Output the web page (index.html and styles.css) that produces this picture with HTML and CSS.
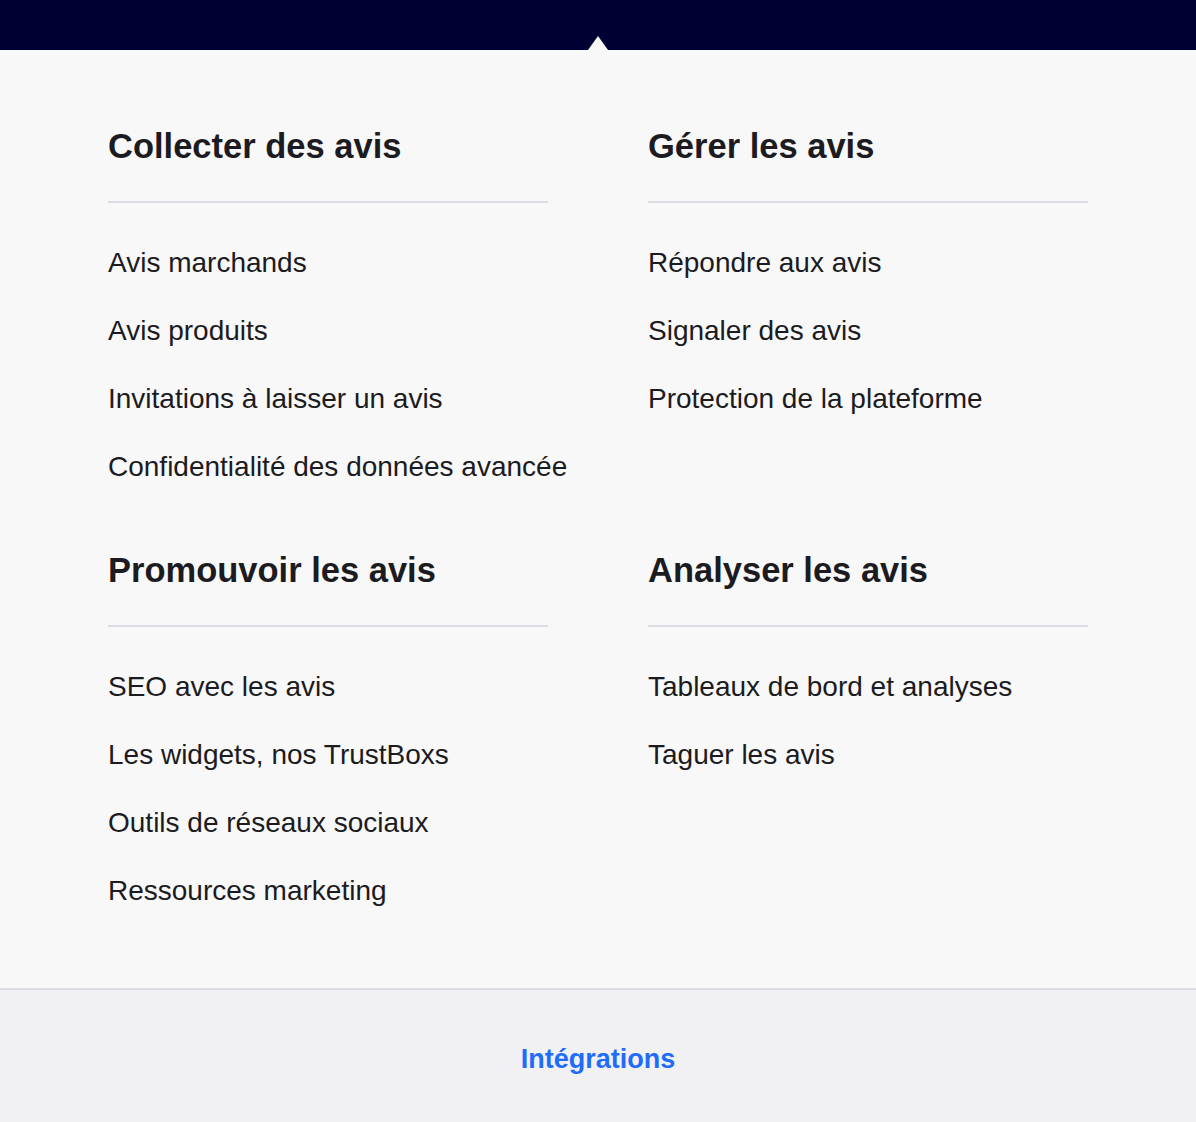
FILE: index.html
```html
<!DOCTYPE html>
<html lang="fr">
<head>
<meta charset="utf-8">
<title>Menu</title>
<link rel="stylesheet" href="styles.css">
</head>
<body>
<header class="topbar"><span class="caret"></span></header>
<main class="panel">
  <div class="grid">
    <section class="group">
      <h2 class="group-title">Collecter des avis</h2>
      <ul class="links">
        <li><a href="#">Avis marchands</a></li>
        <li><a href="#">Avis produits</a></li>
        <li><a href="#">Invitations à laisser un avis</a></li>
        <li><a href="#">Confidentialité des données avancée</a></li>
      </ul>
    </section>
    <section class="group">
      <h2 class="group-title">Gérer les avis</h2>
      <ul class="links">
        <li><a href="#">Répondre aux avis</a></li>
        <li><a href="#">Signaler des avis</a></li>
        <li><a href="#">Protection de la plateforme</a></li>
      </ul>
    </section>
    <section class="group">
      <h2 class="group-title">Promouvoir les avis</h2>
      <ul class="links">
        <li><a href="#">SEO avec les avis</a></li>
        <li><a href="#">Les widgets, nos TrustBoxs</a></li>
        <li><a href="#">Outils de réseaux sociaux</a></li>
        <li><a href="#">Ressources marketing</a></li>
      </ul>
    </section>
    <section class="group">
      <h2 class="group-title">Analyser les avis</h2>
      <ul class="links">
        <li><a href="#">Tableaux de bord et analyses</a></li>
        <li><a href="#">Taguer les avis</a></li>
      </ul>
    </section>
  </div>
</main>
<footer class="footer"><a href="#" class="footer-link">Intégrations</a></footer>
</body>
</html>
```
FILE: styles.css
```css
* { box-sizing: border-box; }
html, body { margin: 0; padding: 0; }
body {
  font-family: "Liberation Sans", Arial, sans-serif;
  background: #f8f8f8;
  color: #1b1b21;
}
.topbar {
  position: relative;
  height: 50px;
  background: #000032;
}
.caret {
  position: absolute;
  left: 588px;
  bottom: 0;
  width: 0;
  height: 0;
  border-left: 10px solid transparent;
  border-right: 10px solid transparent;
  border-bottom: 14px solid #f8f8f8;
}
.panel {
  background: #f8f8f8;
  padding: 75px 0 63px;
}
.grid {
  width: 980px;
  margin: 0 auto;
  display: grid;
  grid-template-columns: 440px 440px;
  column-gap: 100px;
  row-gap: 48px;
}
.group-title {
  margin: 0;
  font-size: 34.5px;
  line-height: 42px;
  font-weight: 700;
  color: #1b1b21;
  padding-bottom: 34px;
  border-bottom: 2px solid #dcdce6;
}
.links {
  list-style: none;
  margin: 26px 0 0;
  padding: 0;
}
.links li {
  font-size: 28px;
  line-height: 68px;
  white-space: nowrap;
}
.links a {
  color: #1b1b21;
  text-decoration: none;
}
.footer {
  background: #f1f1f4;
  border-top: 2px solid #dcdce6;
  padding: 53px 0 47px;
  text-align: center;
}
.footer-link {
  font-size: 27px;
  line-height: 32px;
  font-weight: 700;
  color: #1f6cf9;
  text-decoration: none;
}
```
